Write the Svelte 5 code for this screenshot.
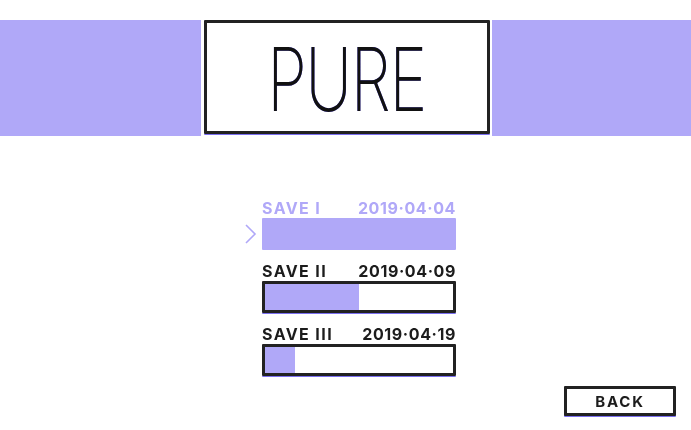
<script>
    const saves = [
        { name: 'SAVE I', date: '2019-04-04', fill: 100, active: true },
        { name: 'SAVE II', date: '2019-04-09', fill: 50, active: false },
        { name: 'SAVE III', date: '2019-04-19', fill: 16, active: false }
    ]
</script>

<main>
    <header class="banner">
        <div class="band left"></div>
        <div class="title-box">
            <h1>PURE</h1>
        </div>
        <div class="band"></div>
    </header>

    <section class="saves">
        {#each saves as save}
            <div class="save" class:active={save.active}>
                <div class="save-info">
                    <span class="name">{save.name}</span>
                    <span>{save.date.replaceAll('-', '·')}</span>
                </div>
                <div class="bar">
                    {#if save.active}
                        <svg class="cursor" width="14" height="20" viewBox="0 0 14 20">
                            <path d="M2 1 L11 10 L2 19" fill="none" stroke="#b0a8f8" stroke-width="1.6" />
                        </svg>
                    {/if}
                    <div class="bar-fill" style="width: {save.fill}%"></div>
                </div>
            </div>
        {/each}
    </section>

    <div class="actions">
        <button>BACK</button>
    </div>
</main>

<style>
    :global(body) {
        background: #fff;
    }

    main {
        width: 691px;
        height: 430px;
        padding-top: 20px;
        box-sizing: border-box;
        overflow: hidden;
        display: flex;
        flex-direction: column;
        filter: blur(0.5px);
        font-family: Inter, "Liberation Sans", sans-serif;
        color: #1c1c1c;
    }

    .banner {
        display: flex;
        height: 116px;
    }

    .band {
        flex: 1;
        background-color: #b0a8f8;
    }

    .band.left {
        flex: none;
        width: 201px;
    }

    .title-box {
        width: 286px;
        height: 114px;
        margin: 0 2px 0 3px;
        padding: 3px 1px 0 0;
        box-sizing: border-box;
        border: 3px solid #222;
        box-shadow: 0 1px 0 #7b70f0;
        border-radius: 1px;
        display: flex;
        align-items: center;
        justify-content: center;
    }

    h1 {
        margin: 0;
        font-weight: 200;
        font-size: 56px;
        letter-spacing: -1px;
        line-height: 1;
        color: #111;
        transform: scale(1.14, 1.58);
        text-shadow: 0 0.5px 0 #5a4ff0;
    }

    .saves {
        width: 194px;
        margin: 63px 0 0 262px;
        display: flex;
        flex-direction: column;
        gap: 12px;
    }

    .save-info {
        display: flex;
        justify-content: space-between;
        font-size: 16px;
        font-weight: 700;
        line-height: 19px;
        letter-spacing: 0.6px;
    }

    .name {
        letter-spacing: 1.4px;
    }

    .bar {
        position: relative;
        height: 32px;
        box-sizing: border-box;
        border: 3px solid #222;
        box-shadow: 0 1px 0 #7b70f0;
        border-radius: 1px;
    }

    .bar-fill {
        height: 100%;
        background-color: #b0a8f8;
    }

    .active {
        color: #b0a8f8;
    }

    .active .bar {
        border-color: #b0a8f8;
        box-shadow: none;
    }

    .cursor {
        position: absolute;
        left: -21px;
        top: 3px;
    }

    .actions {
        display: flex;
        justify-content: flex-end;
        padding-right: 15px;
        margin-top: 10px;
    }

    button {
        width: 112px;
        height: 30px;
        padding: 0;
        background: #fff;
        border: 3px solid #222;
        border-radius: 1px;
        box-shadow: 0 1px 0 #7b70f0;
        font-family: Inter, "Liberation Sans", sans-serif;
        font-size: 15px;
        font-weight: 700;
        letter-spacing: 1.8px;
        color: #1c1c1c;
    }
</style>
